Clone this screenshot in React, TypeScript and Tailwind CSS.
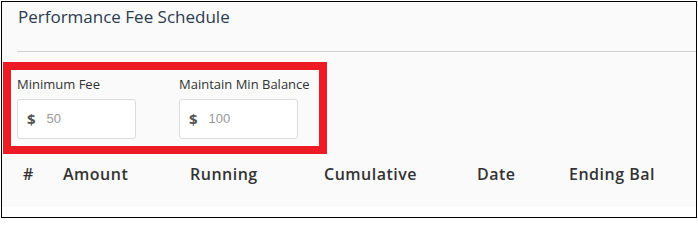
import React from 'react';

const font = { fontFamily: '"Open Sans", "Noto Sans", sans-serif' };

function MoneyField({ label, value }: { label: string; value: string }) {
  return (
    <div className="flex flex-col">
      <label className="text-[13px] leading-[18px] text-[#333]">{label}</label>
      <div className="mt-[6px] flex h-[40px] w-[119px] items-center rounded-[3px] border border-[#dcdcdc] bg-white pl-[9px]">
        <span className="text-[15px] font-bold text-[#555]">$</span>
        <span className="ml-[11px] font-['Liberation_Sans',Arial,sans-serif] text-[13px] text-[#999]">{value}</span>
      </div>
    </div>
  );
}

export default function App() {
  const cols = [
    { name: '#', w: 'w-[40px]' },
    { name: 'Amount', w: 'w-[127px]' },
    { name: 'Running', w: 'w-[134px]' },
    { name: 'Cumulative', w: 'w-[153px]' },
    { name: 'Date', w: 'w-[92px]' },
    { name: 'Ending Bal', w: 'w-[100px]' },
  ];

  return (
    <div className="h-[220px] w-[698px] bg-white pl-[1px] pt-[1px]" style={font}>
      <div className="h-[217px] w-[696px] border border-black bg-white">
        <div className="h-[205px] bg-[#fafafa]">
          <div className="px-[16px] pt-[3px]">
            <h2 className="text-[17px] leading-[24px] text-[#2b3a4f]">Performance Fee Schedule</h2>
          </div>
          <div className="ml-[15px] mt-[22px] h-px bg-[#cfcfcf]" />
          <div className="ml-[1px] mt-[10px] w-[324px] border-8 border-[#ed1c24] pl-[6px] pt-[5px] pb-[7px]">
            <div className="flex gap-[43px]">
              <MoneyField label="Minimum Fee" value="50" />
              <MoneyField label="Maintain Min Balance" value="100" />
            </div>
          </div>
          <div className="mt-[9px] flex pl-[21px]">
            {cols.map((c) => (
              <div key={c.name} className={`${c.w} text-[16px] font-semibold leading-[22px] tracking-[0.5px] text-[#333]`}>
                {c.name}
              </div>
            ))}
          </div>
        </div>
      </div>
    </div>
  );
}
